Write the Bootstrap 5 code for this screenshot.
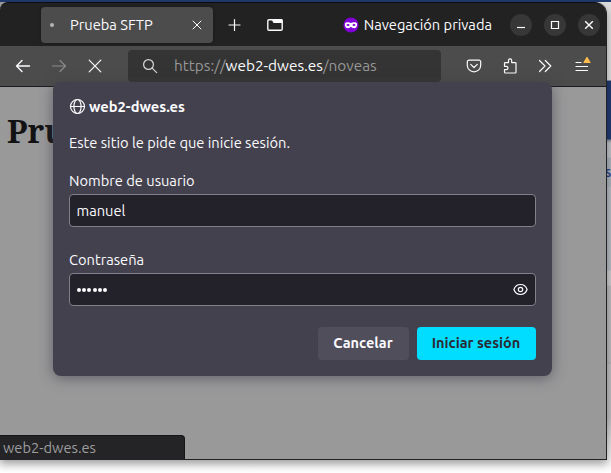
<!DOCTYPE html>
<html lang="es">
<head>
<meta charset="utf-8">
<meta name="viewport" content="width=device-width, initial-scale=1">
<title>Prueba SFTP</title>
<link href="https://cdn.jsdelivr.net/npm/bootstrap@5.3.0/dist/css/bootstrap.min.css" rel="stylesheet">
<style>
html,body{height:100%}
body{font-family:Ubuntu,"Noto Sans","Open Sans",sans-serif;font-size:14.667px;line-height:20px;color:#fbfbfe;background:#fff;overflow:hidden}
svg{display:block;flex:none;fill:none;stroke:currentColor;stroke-width:1.2;stroke-linecap:round;stroke-linejoin:round}
.desktop{width:611px;height:473px;border-top:2px solid #1f3a70;background:linear-gradient(#dedddd 0 78px,#1f3a70 79px 137px,#858b94 138px,#bcc0c5 141px 155px,#a9b1b9 156px 184px,#b2b9bf 185px 268px,#c9c9cb 269px 283px,#b9b9bb 284px 360px,#a8a8aa 361px,#bcbcbe 362px 415px,#dededf 440px,#fff 471px)}
.peek{right:0;top:162px;width:6px;height:17px;color:#26408a;font-size:14px;line-height:17px;font-weight:500}
.window{width:607px;height:458px;border-right:1px solid #222225;border-bottom:1px solid #222225;border-radius:0 12px 0 0;background:#99999a;box-shadow:0 4px 8px #0005}
.titlebar{height:44px;background:#222;border-radius:8px 12px 0 0;padding-left:41px;border-top:1px solid #0c0d10}
.tab{width:172px;height:36px;background:#4c4c4c;border-radius:4px;padding:0 11px 0 9px;box-shadow:0 0 3px #0006}
.busy{width:4px;height:4px;border-radius:50%;background:#b5b5b5;margin-right:16px}
.plus{margin-left:15px}.view{margin-left:24px}
.wins{gap:12px;margin:0 6px 0 18px}
.mask{margin-right:5px}
.wbtn{width:22px;height:22px;border-radius:50%;background:#373737}
.wbtn svg{stroke-linecap:butt;stroke-linejoin:miter}
.toolbar{height:41px;background:#4c4c4c;border-bottom:1px solid #1c1b22;padding-left:15px}
.next{margin-left:20px;color:#8a8a8a}.stop{margin-left:20px}
.urlbar{width:313px;height:32px;background:#343434;border-radius:4px;padding-left:14px;color:#979797;margin-left:25px;font-size:15.36px}
.urlbar b{font-weight:400;color:#fbfbfe}
.urlbar svg{color:#d8d8d8}
.t-url{margin-left:16px}
.pocket{margin-left:25px}.ext{margin-left:20px}.more{margin-left:19px}.menu{margin-left:20px}
.heading{font:700 32px/40px "Noto Serif","DejaVu Serif Condensed","DejaVu Serif",serif;color:#121214;margin:24px 0 0 7px}
.dialog{left:53px;top:80px;width:499px;height:294px;background:#44414e;border-radius:8px;padding:16px;box-shadow:0 2px 14px #3a394499;z-index:5}
.host{height:17px}.t-host{margin-left:3px;font-weight:600}
.msg{margin-top:18px}.lab1{margin-top:18px;margin-bottom:3px}.lab2{margin-top:23px;margin-bottom:3px}.acts{margin-top:21px}
.field{height:33px;background:#23212a;border:1px solid #82808a;border-radius:4px;padding:0 7px 0 6.500px}
.dots i{width:4px;height:4px;border-radius:50%;background:#fbfbfe;margin-right:1.35px}
.act,.act:hover{height:33px;border:0;border-radius:4px;font-weight:600;font-size:14.5px;line-height:20px;padding:0 1px 2px 0}
.cancel{width:91px;background:#504e5b;color:#fbfbfe}
.login{width:119px;background:#00ddff;color:#2b2a33}
.status{left:0;bottom:0;width:185px;height:24px;background:#242427;border:1px solid #151517;border-left:0;border-bottom:0;border-radius:0 4px 0 0;color:#9d9d9f;padding-left:3px}
</style>
<script src="https://cdn.jsdelivr.net/npm/bootstrap@5.3.0/dist/js/bootstrap.bundle.min.js" defer></script>
</head>
<body>
<div class="desktop position-relative">
  <div class="peek position-absolute">s</div>
  <main class="window position-relative">
    <header class="titlebar d-flex align-items-center">
      <div class="tab d-flex align-items-center">
        <span class="busy"></span><span>Prueba SFTP</span>
        <svg class="ms-auto" width="10" height="10" viewBox="0 0 10 10"><path d="M1 1l8 8M9 1L1 9" stroke-width="1"/></svg>
      </div>
      <svg class="plus" width="14" height="14" viewBox="0 0 14 14"><path d="M6.500 1.500v11M1 7h11"/></svg>
      <svg class="view" width="18" height="14" viewBox="0 0 18 14"><rect x="1.800" y="1.700" width="14.400" height="10.600" rx="1.200" stroke-width="1.400"/><path d="M7 1.500h9v3H8Q7 4.500 7 3.500z" fill="currentColor" stroke-width="1"/></svg>
      <div class="d-flex align-items-center ms-auto">
        <svg class="mask" width="16" height="16" viewBox="0 0 16 16"><circle cx="8" cy="8" r="7.600" fill="#8000d7" stroke="none"/><path d="M1.900 6.600C3.200 4.800 6 5 8 6.100c2-1.100 4.800-1.300 6.100.5.300 3-1 4.700-3.100 4.700-1.500 0-2-1.300-3-1.300s-1.500 1.300-3 1.300c-2.100 0-3.400-1.700-3.100-4.700z" fill="#fff" stroke="none"/><ellipse cx="5" cy="8" rx="1.500" ry="1" fill="#8000d7" stroke="none"/><ellipse cx="11" cy="8" rx="1.500" ry="1" fill="#8000d7" stroke="none"/></svg>
        <span>Navegación privada</span>
      </div>
      <div class="wins d-flex">
        <div class="wbtn d-flex align-items-center justify-content-center"><svg width="10" height="10" viewBox="0 0 10 10"><path d="M1 7.500h8"/></svg></div>
        <div class="wbtn d-flex align-items-center justify-content-center"><svg width="10" height="10" viewBox="0 0 10 10"><path d="M1.500 1.500h7v7h-7z"/></svg></div>
        <div class="wbtn d-flex align-items-center justify-content-center"><svg width="10" height="10" viewBox="0 0 10 10"><path d="M1.200 1.200l7.600 7.600M8.800 1.200L1.200 8.800" stroke-width="1.400"/></svg></div>
      </div>
    </header>
    <nav class="toolbar d-flex align-items-center">
      <svg width="16" height="16" viewBox="0 0 16 16"><path d="M14.500 8H1.500M7 2.500L1.500 8 7 13.500" stroke-width="1.400"/></svg>
      <svg class="next" width="16" height="16" viewBox="0 0 16 16"><path d="M1.500 8h13M9 2.500L14.500 8 9 13.500"/></svg>
      <svg class="stop" width="16" height="16" viewBox="0 0 16 16"><path d="M2.200 2.200l11.600 11.600M13.800 2.200L2.200 13.800"/></svg>
      <div class="urlbar d-flex align-items-center">
        <svg width="16" height="16" viewBox="0 0 16 16"><circle cx="6.500" cy="6.500" r="4.900"/><path d="M10.200 10.200l4.500 4.500"/></svg>
        <span class="t-url">https://<b>web2-dwes.es</b>/noveas</span>
      </div>
      <svg class="pocket" width="16" height="16" viewBox="0 0 16 16"><path d="M3 2.200h10a1.700 1.700 0 0 1 1.700 1.700v3.300a6.700 6.700 0 0 1-13.400 0V3.900A1.700 1.700 0 0 1 3 2.200zM4.700 6.400L8 9.500l3.300-3.100"/></svg>
      <svg class="ext" width="16" height="16" viewBox="0 0 16 16"><path d="M2.500 6.800V5.300q0-.7.700-.7h3.300V2.500a1.600 1.600 0 0 1 3.200 0v2.100h3.600q.7 0 .7.700v9q0 .7-.7.700H3.200q-.7 0-.7-.7v-2.600h1.800a1.700 1.700 0 0 0 0-3.400H2.500z"/></svg>
      <svg class="more" width="16" height="16" viewBox="0 0 16 16"><path d="M2.500 2.500L8 8l-5.500 5.500M8.300 2.500L13.800 8l-5.500 5.500"/></svg>
      <svg class="menu" width="20" height="20" viewBox="0 0 20 20"><path d="M3 6.500h5M3 10.500h11.500M3 14.500h11.500"/><path d="M14 1.500l3 5h-6z" fill="#ffbd4f" stroke="#ffbd4f"/></svg>
    </nav>
    <h1 class="heading">Pru</h1>
    <div class="status position-absolute d-flex align-items-center">web2-dwes.es</div>
  </main>
  <section class="dialog position-absolute">
    <div class="host d-flex align-items-center">
      <svg width="17" height="17" viewBox="0 0 17 17"><circle cx="8.500" cy="8.500" r="7"/><ellipse cx="8.500" cy="8.500" rx="3.600" ry="7"/><path d="M1.500 8.500h14"/></svg>
      <span class="t-host">web2-dwes.es</span>
    </div>
    <p class="msg mb-0">Este sitio le pide que inicie sesión.</p>
    <label class="d-block lab1">Nombre de usuario</label>
    <div class="field d-flex align-items-center">manuel</div>
    <label class="d-block lab2">Contraseña</label>
    <div class="field d-flex align-items-center">
      <div class="dots d-flex"><i></i><i></i><i></i><i></i><i></i><i></i></div>
      <svg class="ms-auto" width="15" height="15" viewBox="0 0 15 15"><path d="M.9 7.500C2 4.300 4.500 2.500 7.500 2.500s5.500 1.800 6.600 5c-1.100 3.200-3.600 5-6.600 5S2 10.700.9 7.500z"/><circle cx="7.500" cy="7.500" r="2.200"/></svg>
    </div>
    <div class="acts d-flex justify-content-end gap-2">
      <button class="btn act cancel">Cancelar</button>
      <button class="btn act login">Iniciar sesión</button>
    </div>
  </section>
</div>
</body>
</html>
